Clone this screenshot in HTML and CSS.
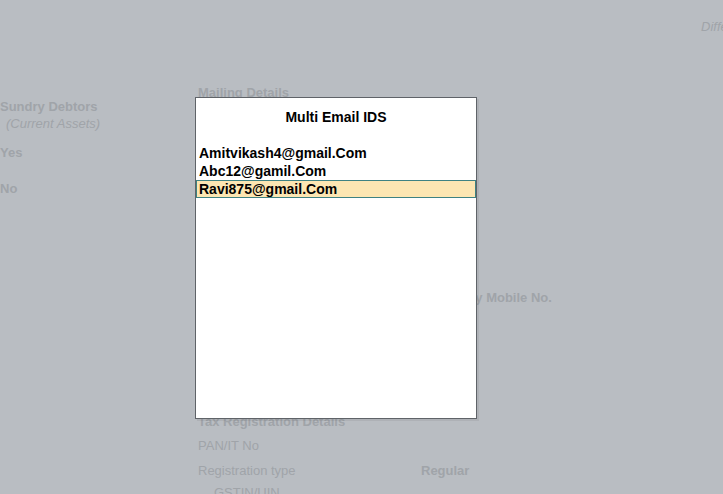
FILE: index.html
```html
<!DOCTYPE html>
<html lang="en">
<head>
  <meta charset="UTF-8" />
  <title>Multi Email IDS</title>
  <link rel="stylesheet" href="styles.css">
</head>
<body>
  <div class="screen">
    <div class="col-left">
      <div class="line bold">Sundry Debtors</div>
      <div class="line italic indent">(Current Assets)</div>
      <div class="line bold yes">Yes</div>
      <div class="line bold no">No</div>
    </div>

    <div class="col-mid">
      <div class="line bold mailing">Mailing Details</div>
      <div class="line bold tax">Tax Registration Details</div>
      <div class="line pan">PAN/IT No</div>
      <div class="line reg-row">
        <span class="reg-label">Registration type</span>
        <span class="bold">Regular</span>
      </div>
      <div class="line gstin">GSTIN/UIN</div>
    </div>

    <div class="col-right">
      <div class="line italic diff">Difference</div>
      <div class="line bold mobile">Party Mobile No.</div>
    </div>
  </div>

  <div class="modal">
    <h1>Multi Email IDS</h1>
    <ul class="emails">
      <li>Amitvikash4@gmail.Com</li>
      <li>Abc12@gamil.Com</li>
      <li class="selected">Ravi875@gmail.Com</li>
    </ul>
  </div>
</body>
</html>
```

FILE: styles.css
```css
* {
  margin: 0;
  padding: 0;
  box-sizing: border-box;
  font-family: 'Liberation Sans', Arial, sans-serif;
}

body {
  background: #b9bdc2;
  color: #a0a4a9;
  width: 723px;
  height: 494px;
  overflow: hidden;
  position: relative;
}

.screen {
  display: flex;
  font-size: 13px;
  white-space: nowrap;
}

.line {
  line-height: 17px;
}

.bold {
  font-weight: 700;
}

.italic {
  font-style: italic;
}

/* left column */
.col-left {
  width: 198px;
  flex-shrink: 0;
  padding-top: 98px;
}

.indent {
  padding-left: 6px;
}

.yes {
  margin-top: 12px;
}

.no {
  margin-top: 19px;
}

/* middle column */
.col-mid {
  width: 252px;
  flex-shrink: 0;
  padding-top: 84px;
}

.tax {
  margin-top: 312px;
}

.pan {
  margin-top: 7px;
}

.reg-row {
  margin-top: 8px;
  display: flex;
}

.reg-label {
  width: 223px;
  flex-shrink: 0;
}

.gstin {
  margin-top: 5px;
  padding-left: 16px;
}

/* right column */
.col-right {
  flex: 1;
  overflow: hidden;
  padding-top: 18px;
}

.diff {
  padding-left: 251px;
}

.mobile {
  margin-top: 254px;
}

/* popup */
.modal {
  position: absolute;
  left: 195px;
  top: 97px;
  width: 282px;
  height: 322px;
  background: white;
  border: 1px solid #5f6368;
  box-shadow: 2px 2px 0 rgba(0,0,0,0.06);
  color: #000;
}

.modal h1 {
  margin-top: 10px;
  font-size: 14px;
  line-height: 18px;
  font-weight: 700;
  text-align: center;
}

.emails {
  list-style: none;
  margin-top: 18px;
}

.emails li {
  font-size: 14px;
  font-weight: 700;
  line-height: 16px;
  padding-left: 2px;
  border: 1px solid transparent;
}

.emails li.selected {
  background: #fce6b2;
  border-color: #3e8282;
}
```
